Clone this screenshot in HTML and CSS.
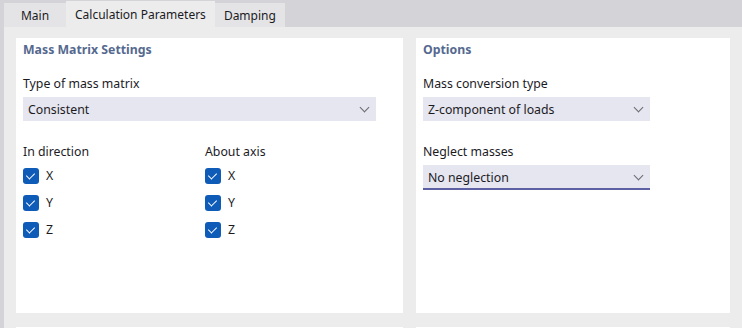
FILE: index.html
```html
<!DOCTYPE html>
<html lang="en">
<head>
    <meta charset="UTF-8">
    <meta name="viewport" content="width=device-width, initial-scale=1.0">
    <title>Calculation Parameters</title>
    <link rel="stylesheet" href="styles.css">
</head>
<body>
    <div class="tabs">
        <div class="tab tab-main">Main</div>
        <div class="tab active">Calculation Parameters</div>
        <div class="tab">Damping</div>
    </div>

    <div class="content">
        <div class="panel">
            <h2>Mass Matrix Settings</h2>
            <div class="field">
                <label>Type of mass matrix</label>
                <div class="select wide">Consistent <span class="chevron"></span></div>
            </div>

            <div class="checks">
                <div class="check-col">
                    <p class="col-title">In direction</p>
                    <div class="check"><span class="box"></span>X</div>
                    <div class="check"><span class="box"></span>Y</div>
                    <div class="check"><span class="box"></span>Z</div>
                </div>
                <div class="check-col">
                    <p class="col-title">About axis</p>
                    <div class="check"><span class="box"></span>X</div>
                    <div class="check"><span class="box"></span>Y</div>
                    <div class="check"><span class="box"></span>Z</div>
                </div>
            </div>
        </div>

        <div class="panel">
            <h2>Options</h2>
            <div class="field">
                <label>Mass conversion type</label>
                <div class="select">Z-component of loads <span class="chevron"></span></div>
            </div>
            <div class="field">
                <label>Neglect masses</label>
                <div class="select focused">No neglection <span class="chevron"></span></div>
            </div>
        </div>

        <!-- next row of panels, only its top edge is visible -->
        <div class="panel"></div>
        <div class="panel"></div>
    </div>
</body>
</html>
```

FILE: styles.css
```css
* { margin: 0; padding: 0; box-sizing: border-box; }
html, body { height: 328px; overflow: hidden; }
body { font-family: "Segoe UI", "Noto Sans", sans-serif; font-size: 12.3px; color: #1b1b1f; background-color: #ececec; }

.tabs { display: flex; height: 27px; padding-left: 4px; background-color: #d4d4d8; }
.tab { display: flex; align-items: center; padding: 0 9px; margin-top: 3px; background-color: #e4e4e6; font-size: 12px; }
.tab-main { min-width: 62px; justify-content: center; }
.tab.active { margin-top: 1px; background-color: #ececec; }

.content { display: grid; grid-template-columns: 387px 314px; grid-template-rows: 275px 1px; column-gap: 13px; row-gap: 14px; padding: 11px 12px 0 12px; border-left: 4px solid #d4d4d8; }

.panel { background-color: #fff; padding: 3px 7px; }
.panel h2 { font-size: 12.3px; font-weight: 700; color: #55698f; line-height: 17px; margin-bottom: 18px; }

.field { margin-bottom: 23px; }
.field label { display: block; line-height: 16px; margin-bottom: 5px; }

.select { display: flex; align-items: center; justify-content: space-between; width: 227px; height: 24px; padding: 0 8px 0 5px; background-color: #e6e6f0; }
.select.wide { width: 353px; }
.select.focused { border-bottom: 2px solid #5d60a3; height: 25px; padding-top: 2px; }
.chevron { width: 7px; height: 7px; border-right: 1px solid #6a6a70; border-bottom: 1px solid #6a6a70; transform: rotate(45deg); margin-top: -4px; }

.checks { display: flex; }
.check-col { width: 182px; }
.col-title { line-height: 16px; margin-bottom: 2px; }
.check { display: flex; align-items: center; height: 27px; }
.box { position: relative; width: 16px; height: 16px; border-radius: 3px; background-color: #0f5cb8; margin-right: 7px; }
.box::after { content: ""; position: absolute; left: 5px; top: 3px; width: 4px; height: 7px; border-right: 1.5px solid #fff; border-bottom: 1.5px solid #fff; transform: rotate(45deg); }
```
